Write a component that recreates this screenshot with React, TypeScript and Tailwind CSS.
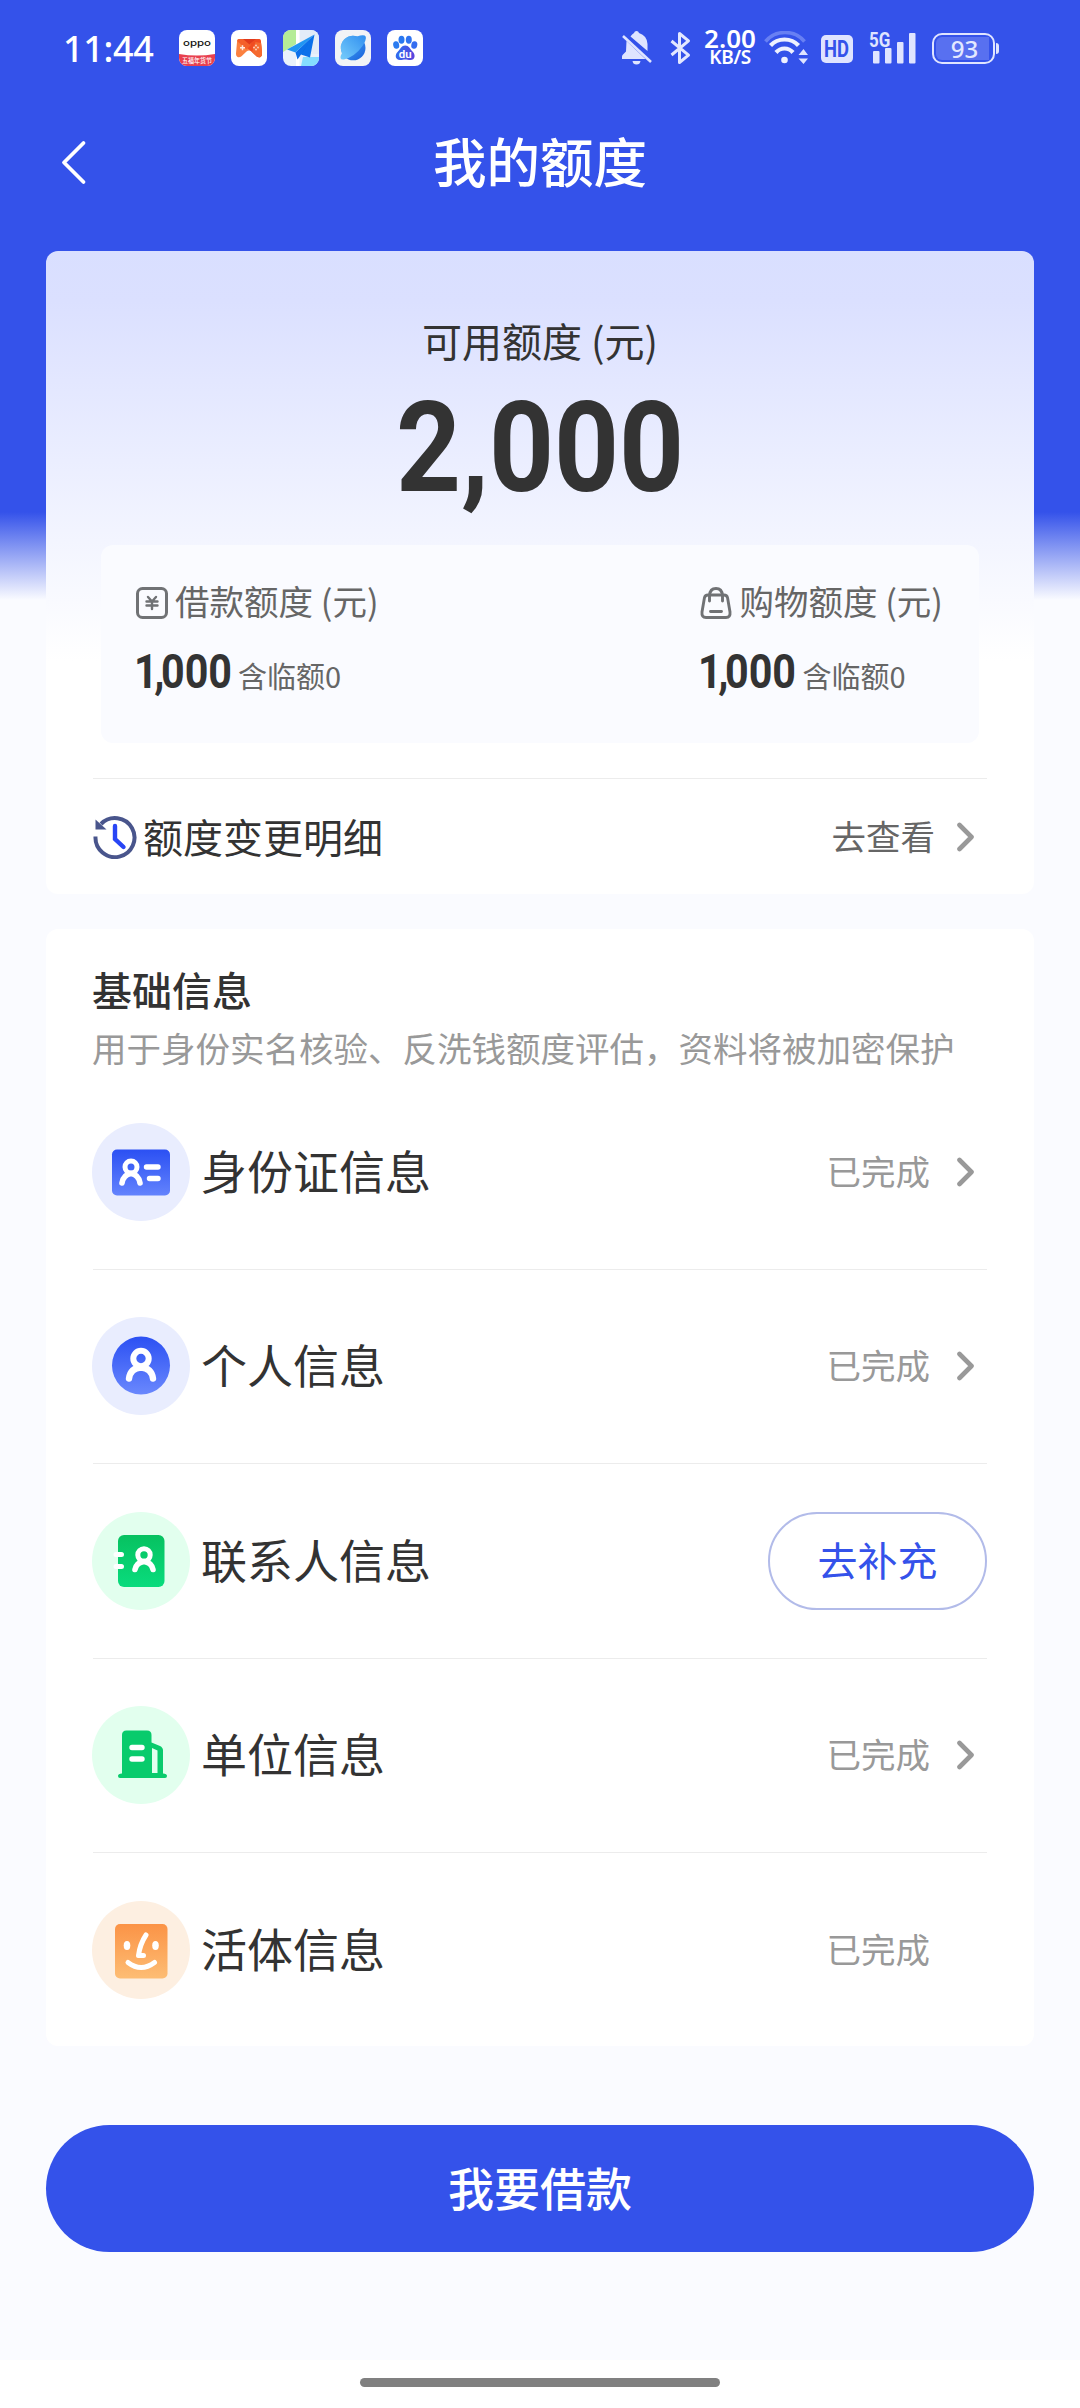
import type { ReactNode } from "react";

/* ---------- status bar ---------- */

function OppoIcon() {
  return (
    <svg className="size-9" viewBox="0 0 36 36">
      <defs>
        <clipPath id="oppoClip"><rect width="36" height="36" rx="8" /></clipPath>
      </defs>
      <g clipPath="url(#oppoClip)">
        <rect width="36" height="36" fill="#fff" />
        <path d="M0 24Q18 27 36 24V36H0Z" fill="#e8404f" />
        <text x="18" y="16.4" textAnchor="middle" textLength="28" lengthAdjust="spacingAndGlyphs" fontFamily="Inter, sans-serif" fontSize="9" fontWeight="500" fill="#111">oppo</text>
        <text x="18" y="33.2" textAnchor="middle" textLength="30" lengthAdjust="spacingAndGlyphs" fontFamily="'Noto Sans CJK SC', sans-serif" fontSize="6.4" fontWeight="500" fill="#fff">五福年货节</text>
      </g>
    </svg>
  );
}

function GameIcon() {
  return (
    <svg className="size-9" viewBox="0 0 36 36">
      <rect width="36" height="36" rx="8" fill="#fff" />
      <path d="M8 9H28Q29.600 9 29.900 11L31 23.500Q31.200 26 29.500 27Q27.500 28 25.500 26.200L20.500 21.500Q18 19.500 15.500 21.500L10.500 26.200Q8.500 28 6.500 27Q4.800 26 5 23.500L6.100 11Q6.400 9 8 9Z" fill="#fb8140" />
      <path d="M15 9H28Q29.600 9 29.900 11L31 23.500Q31.200 26 29.500 27Q27.500 28 25.500 26.200L20.500 21.500 15.500 17.500 24 9.500Z" fill="#f04c22" />
      <path d="M24.500 12 30 13 31 23.500Q31.200 26 29.500 27Q27.500 28 25.500 26.200L21 22Z" fill="#f56a30" />
      <path d="M6.100 11Q6.400 9 8 9H14L20 15 15.500 19.500Z" fill="#f4602a" />
      <path d="M12 9H25L18.500 14.500Z" fill="#e03a1c" />
      <path d="M9 17.800H14M11.500 15.300V20.300" stroke="#ffe9df" strokeWidth="1.500" />
      <circle cx="25" cy="15.500" r=".9" fill="#ffd9c8" />
      <circle cx="25" cy="19.500" r=".9" fill="#ffd9c8" />
      <circle cx="23" cy="17.500" r=".9" fill="#ffd9c8" />
      <circle cx="27" cy="17.500" r=".9" fill="#ffd9c8" />
    </svg>
  );
}

function MapIcon() {
  return (
    <svg className="size-9" viewBox="0 0 36 36">
      <defs>
        <clipPath id="mapClip"><rect width="36" height="36" rx="8" /></clipPath>
      </defs>
      <g clipPath="url(#mapClip)">
        <rect width="36" height="36" fill="#e9f1fb" />
        <path d="M0 0H13V14L0 22Z" fill="#b5ec97" />
        <path d="M16 0H36V24H18Z" fill="#e3ecf8" />
        <path d="M13 0H16.500V36H13Z" fill="#fff" />
        <path d="M20 27H36V36H18Z" fill="#84dcff" />
        <path d="M31.500 4.500 4 19.500 12.500 22.500Z" fill="#2196f3" />
        <path d="M31.500 4.500 12.500 22.500 14.500 29.500 18 24.500 27 27.500Z" fill="#0b70ea" />
        <path d="M31.500 4.500 18 24.500 14.500 29.500Z" fill="#0552bd" />
      </g>
    </svg>
  );
}

function BrowserIcon() {
  return (
    <svg className="size-9" viewBox="0 0 36 36">
      <defs>
        <linearGradient id="planet" x1="0" y1="0" x2="1" y2="1">
          <stop offset="0" stopColor="#4fb4f7" />
          <stop offset="1" stopColor="#1760dd" />
        </linearGradient>
        <linearGradient id="ring" x1="1" y1="0" x2="0" y2="1">
          <stop offset="0" stopColor="#2f8ef0" />
          <stop offset="1" stopColor="#77cdfb" />
        </linearGradient>
      </defs>
      <rect width="36" height="36" rx="8" fill="#f1f3f6" />
      <circle cx="18.200" cy="18" r="12.300" fill="url(#planet)" />
      <path d="M22 6.500Q29.500 4 30.800 6.800Q31.500 10 27.500 16Q20 26.500 9 29.500Q6 30 5.500 28Q5.300 26 7 23Q3.500 15 9.500 9Q15 4 22 6.500Z" fill="url(#ring)" />
    </svg>
  );
}

function BaiduIcon() {
  return (
    <svg className="size-9" viewBox="0 0 36 36">
      <defs>
        <linearGradient id="paw" x1="0" y1="0" x2="1" y2=".2">
          <stop offset="0" stopColor="#2672f2" />
          <stop offset="1" stopColor="#5846de" />
        </linearGradient>
      </defs>
      <rect width="36" height="36" rx="8" fill="#fff" />
      <ellipse cx="9.200" cy="15" rx="3" ry="3.800" fill="#2a7bf0" transform="rotate(-12 9.200 15)" />
      <ellipse cx="14.500" cy="9.800" rx="3" ry="4" fill="#2a78f0" />
      <ellipse cx="21.800" cy="9.800" rx="3" ry="4" fill="#2f74f0" />
      <ellipse cx="27.300" cy="15" rx="3" ry="3.800" fill="#356df0" transform="rotate(12 27.300 15)" />
      <path d="M18.200 15.500C22 15.500 23 19 25.500 21.500C29 25 28 30 23.500 30C21 30 20 29.500 18.200 29.500S15.500 30 13 30C8 30 7.500 24.500 11 21.500C13.500 19 14.500 15.500 18.200 15.500Z" fill="url(#paw)" />
      <text x="18.200" y="28" textAnchor="middle" fontFamily="Roboto, sans-serif" fontSize="11.500" fontWeight="600" fill="#fff">du</text>
    </svg>
  );
}

function BellOffIcon() {
  return (
    <svg className="h-[34px] w-[31px]" viewBox="0 0 31 34">
      <g fill="#dfe4ff">
        <path d="M15.500 0Q17.500 0 18 2Q26 4.500 26.500 13V20L9.500 5.500Q11 3 13 2Q13.500 0 15.500 0Z" />
        <path d="M5.500 10 24.500 28H1V25.500Q1 24.500 2 23.500L5 20.500Z" />
        <path d="M11.500 30H19.500Q19 33.500 15.500 33.500T11.500 30Z" />
      </g>
      <path d="M2 5 30 31" stroke="#dfe4ff" strokeWidth="2.600" />
    </svg>
  );
}

function BluetoothIcon() {
  return (
    <svg className="h-[34px] w-[21px]" viewBox="0 0 21 34" fill="none">
      <path d="M1.500 10 18.500 24.200 9.500 31.500V2.500L18.500 9.800 1.500 24" stroke="#e3e8ff" strokeWidth="3" strokeLinejoin="round" />
    </svg>
  );
}

function WifiIcon() {
  return (
    <svg className="h-[34px] w-11" viewBox="0 0 44 34" fill="none">
      <path d="M1.500 10.500Q9 1.500 21 1.500T40.500 10.500" stroke="#6880f3" strokeWidth="3.600" />
      <path d="M6.500 14.500Q12 8.500 20.500 8.500T34.500 14.500" stroke="#eef1ff" strokeWidth="4.200" />
      <path d="M12 21.500Q15.500 17.500 20.500 17.500T29 21.500" stroke="#eef1ff" strokeWidth="4.200" />
      <circle cx="20.500" cy="29" r="3.300" fill="#eef1ff" />
      <path d="M34.500 24 39.500 18 44 24ZM34.500 27.500H44L39.500 33Z" fill="#dfe4ff" />
    </svg>
  );
}

function SignalBars() {
  return (
    <svg className="h-[34px] w-[43px]" viewBox="0 0 43 34" fill="#dfe4ff">
      <rect x="0" y="20" width="6.500" height="12.500" rx="1" />
      <rect x="12" y="17" width="6.500" height="15.500" rx="1" />
      <rect x="24" y="11" width="6.500" height="21.500" rx="1" />
      <rect x="36" y="2" width="6.500" height="30.500" rx="1" />
    </svg>
  );
}

function StatusBar() {
  return (
    <div className="flex h-24 items-center pl-[63px] pr-[79px] text-white">
      <span className="w-[116px] pt-0.5 font-['Noto_Sans',sans-serif] text-[36px] font-medium leading-none tracking-[-0.300px]">11:44</span>
      <div className="flex gap-4">
        <OppoIcon />
        <GameIcon />
        <MapIcon />
        <BrowserIcon />
        <BaiduIcon />
      </div>
      <div className="ml-auto flex items-center">
        <BellOffIcon />
        <div className="ml-[18px]"><BluetoothIcon /></div>
        <div className="ml-3 flex h-[50px] w-[54px] flex-col items-center font-['Noto_Sans',sans-serif] font-semibold">
          <span className="mt-[3px] text-[26px] leading-[24px]">2.00</span>
          <span className="-mt-[2px] text-[19px] leading-[19px] tracking-[-0.300px]">KB/S</span>
        </div>
        <div className="ml-[7px]"><WifiIcon /></div>
        <div className="ml-[13px] mt-0.5 flex h-7 w-8 items-center justify-center rounded-[5px] bg-[#dfe4ff] font-['Roboto',sans-serif] text-[23px] font-bold leading-none text-[#3452ea]">
          <span className="scale-x-80">HD</span>
        </div>
        <div className="relative ml-[20px]">
          <SignalBars />
          <span className="absolute -left-[4px] -top-[3px] origin-left scale-x-85 font-['Roboto',sans-serif] text-[20px] font-bold leading-[24px] text-[#dfe4ff]">5G</span>
        </div>
        <div className="ml-4 mt-px flex h-[31px] w-[63px] items-center rounded-[10px] border-2 border-[#dfe4ff] p-[2px]">
          <div className="flex h-full w-[53px] items-center justify-center rounded-l-[6px] bg-[#5870f0] pl-1 font-['Noto_Sans',sans-serif] text-[24px] font-medium leading-none text-[#e3e8ff]">93</div>
        </div>
        <div className="ml-px mr-[2px] h-[11px] w-[3px] rounded-r-sm bg-[#dfe4ff]" />
      </div>
    </div>
  );
}

/* ---------- shared drawings ---------- */

function Chevron() {
  return (
    <svg className="h-[30px] w-[18px]" viewBox="0 0 18 30" fill="none">
      <path d="M2.500 3 14.500 15 2.500 27" stroke="#999" strokeWidth="4.600" strokeLinecap="round" strokeLinejoin="round" />
    </svg>
  );
}

function CashIcon() {
  return (
    <svg className="size-8" viewBox="0 0 32 32" fill="none" stroke="#707275" strokeLinecap="round">
      <rect x="1.500" y="1.500" width="29" height="29" rx="5" strokeWidth="3" />
      <path d="M12 10 16 14.500 20 10M10.500 14.500H21.500M10.500 18.500H21.500M16 14.500V22" strokeWidth="2.400" />
    </svg>
  );
}

function BagIcon() {
  return (
    <svg className="size-8" viewBox="0 0 32 32" fill="none" stroke="#707275" strokeLinecap="round">
      <path d="M8 8H24Q27 8 27.600 11L30 25Q30.600 30.500 26 30.500H6Q1.400 30.500 2 25L4.400 11Q5 8 8 8Z" strokeWidth="2.900" />
      <path d="M9.500 14V8.500Q10 1.500 16 1.500T22.500 8.500V14M10.500 24.500H21.500" strokeWidth="2.900" />
    </svg>
  );
}

function HistoryIcon() {
  return (
    <svg className="size-11" viewBox="0 0 44 44" fill="none">
      <path d="M2.500 21.500A19.500 19.500 0 1 0 8 9" stroke="#49558c" strokeWidth="4" />
      <path d="M2.500 4.500V14.500H13.500Z" fill="#49558c" />
      <path d="M22 11V24L30.500 32" stroke="#2845f5" strokeWidth="4.400" strokeLinecap="round" />
    </svg>
  );
}

function IdCardIcon() {
  return (
    <svg className="size-full" viewBox="0 0 98 98" fill="none">
      <defs>
        <linearGradient id="idBlue" x1="0" y1="0" x2="0" y2="1">
          <stop offset="0" stopColor="#2b50f3" />
          <stop offset="1" stopColor="#6383fd" />
        </linearGradient>
      </defs>
      <rect x="20" y="26.500" width="58" height="46" rx="5" fill="url(#idBlue)" />
      <g stroke="#fff" strokeLinecap="round">
        <circle cx="39" cy="44" r="6" strokeWidth="5" />
        <path d="M30 60Q31.500 51.500 39 50.500Q46.500 51.500 48 60" strokeWidth="5.600" />
        <path d="M54.500 44H66M57.500 55.500H66" strokeWidth="5.400" />
      </g>
    </svg>
  );
}

function PersonIcon() {
  return (
    <svg className="size-full" viewBox="0 0 98 98" fill="none">
      <defs>
        <linearGradient id="personBlue" x1="0" y1="0" x2="0" y2="1">
          <stop offset="0" stopColor="#2b50f3" />
          <stop offset="1" stopColor="#6a88fd" />
        </linearGradient>
      </defs>
      <circle cx="49" cy="48.500" r="29" fill="url(#personBlue)" />
      <g stroke="#fff" strokeLinecap="round">
        <circle cx="49" cy="41.500" r="7.700" strokeWidth="6" />
        <path d="M37 61.500Q38.500 51 49 50.500Q59.500 51 61 61.500" strokeWidth="6.400" />
      </g>
    </svg>
  );
}

function ContactIcon() {
  return (
    <svg className="size-full" viewBox="0 0 98 98" fill="none">
      <defs>
        <linearGradient id="contactGreen" x1="0" y1="0" x2="0" y2="1">
          <stop offset="0" stopColor="#07c160" />
          <stop offset="1" stopColor="#09dc7d" />
        </linearGradient>
      </defs>
      <rect x="26" y="23" width="46.500" height="52" rx="6" fill="url(#contactGreen)" />
      <g stroke="#fff" strokeLinecap="round">
        <path d="M24 42.500H29.500M24 54.500H29.500" strokeWidth="5" />
        <circle cx="52" cy="43" r="6.200" strokeWidth="5" />
        <path d="M43 57.500Q44.500 50.500 52 49.500Q59.500 50.500 61 57.500" strokeWidth="5.600" />
      </g>
    </svg>
  );
}

function CompanyIcon() {
  return (
    <svg className="size-full" viewBox="0 0 98 98" fill="none">
      <path d="M30 67.500V29Q30 24.500 34.500 24.500H55Q59.500 24.500 59.500 29V36.500L68 40Q71 41.500 71 44.500V67.500Q75 67.500 75 70Q75 72 73 72H28Q26 72 26 70Q26 67.500 30 67.500Z" fill="#09cb6c" />
      <path d="M60 42 65.500 44.500V67H60Z" fill="#e2ffee" />
      <path d="M40 41.500H50M40 53H50" stroke="#fff" strokeWidth="5.400" strokeLinecap="round" />
    </svg>
  );
}

function FaceIcon() {
  return (
    <svg className="size-full" viewBox="0 0 98 98" fill="none">
      <defs>
        <linearGradient id="faceOrange" x1="0" y1="0" x2="0" y2="1">
          <stop offset="0" stopColor="#fb9346" />
          <stop offset="1" stopColor="#fdbd74" />
        </linearGradient>
      </defs>
      <rect x="23" y="23" width="52.500" height="54.500" rx="5" fill="url(#faceOrange)" />
      <ellipse cx="35" cy="44.500" rx="3.300" ry="4.500" fill="#fff" />
      <ellipse cx="63.500" cy="44.500" rx="3.300" ry="4.500" fill="#fff" />
      <g stroke="#fff" strokeLinecap="round" strokeLinejoin="round">
        <path d="M54 34Q48 43 46.500 54.500H51.500" strokeWidth="5" />
        <path d="M36 61.500Q49 71.500 62.500 61.500" strokeWidth="5" />
      </g>
    </svg>
  );
}

/* ---------- content ---------- */

function Limit({ icon, label }: { icon: ReactNode; label: string }) {
  return (
    <div>
      <div className="flex h-[44px] items-center gap-[7px] text-[#666]">
        {icon}
        <span className="whitespace-nowrap pb-1.5 text-[34.500px] leading-none">{label}</span>
      </div>
      <div className="mt-[22px] flex h-[50px] items-center">
        <div className="w-[102px]">
          <span className="-ml-0.5 inline-block origin-left scale-x-86 font-['Roboto',sans-serif] text-[48px] font-bold leading-none text-[#333]">
            <span className="tracking-[-4px]">1,</span>000
          </span>
        </div>
        <span className="mt-1.5 text-[29px] leading-none text-[#666]">含临额0</span>
      </div>
    </div>
  );
}

type Row = { label: string; icon: ReactNode; tint: string; action: "open" | "fill" | "done" };

const rows: Row[] = [
  { label: "身份证信息", icon: <IdCardIcon />, tint: "bg-[#e9edfe]", action: "open" },
  { label: "个人信息", icon: <PersonIcon />, tint: "bg-[#e9edfe]", action: "open" },
  { label: "联系人信息", icon: <ContactIcon />, tint: "bg-[#e2ffee]", action: "fill" },
  { label: "单位信息", icon: <CompanyIcon />, tint: "bg-[#e2ffee]", action: "open" },
  { label: "活体信息", icon: <FaceIcon />, tint: "bg-[#fdefe1]", action: "done" },
];

function InfoRow({ row }: { row: Row }) {
  return (
    <li className="flex h-[194.500px] items-center border-b border-[#ececec] last:border-b-0">
      <div className={`-ml-px size-[98px] rounded-full ${row.tint}`}>{row.icon}</div>
      <span className="ml-[11px] pb-1.5 text-[46px] leading-none">{row.label}</span>
      {row.action === "fill" ? (
        <button className="ml-auto h-[98px] w-[219px] rounded-full border-2 border-[#b2bbe9] pb-1 text-[40px] leading-none text-[#3452ea]">去补充</button>
      ) : (
        <div className="ml-auto flex items-center pr-3 text-[34.500px] leading-none text-[#999]">
          <span className="pb-1">已完成</span>
          <span className="ml-[27px] w-[18px]">{row.action === "open" && <Chevron />}</span>
        </div>
      )}
    </li>
  );
}

export default function App() {
  return (
    <div className="flex h-[2408px] w-[1080px] flex-col overflow-hidden bg-[#fafbff] bg-[linear-gradient(to_bottom,#3452ea_0px,#3452ea_512px,#fafbff_600px)] font-['Noto_Sans_CJK_SC',sans-serif] text-[#333]">
      <StatusBar />

      <header className="grid h-[155px] grid-cols-[1fr_auto_1fr] items-start pt-[34px] text-white">
        <svg className="ml-[60px] mt-[9px] h-[46px] w-7" viewBox="0 0 28 46" fill="none">
          <path d="M23.500 4 4 23.500 23.500 43" stroke="#fff" strokeWidth="3.800" strokeLinecap="round" strokeLinejoin="round" />
        </svg>
        <h1 className="text-[53.500px] font-medium leading-[60px]">我的额度</h1>
      </header>

      <section className="mx-[46px] flex h-[643px] flex-col rounded-xl bg-[linear-gradient(to_bottom,#d9dfff_0px,#dbe0ff_50px,#f3f5ff_290px,#ffffff_410px)] px-[47px]">
        <p className="mt-[67px] text-center text-[40px] leading-[44px]">可用额度 (元)</p>
        <div className="mt-[25px] flex h-[122px] items-center justify-center">
          <span className="scale-x-90 font-['Roboto',sans-serif] text-[126px] font-bold leading-none">2,000</span>
        </div>
        <div className="mx-2 mt-[36px] flex h-[198px] shrink-0 justify-between rounded-xl bg-[#fafbff] pl-[35px] pr-[36px] pt-[36px]">
          <Limit icon={<CashIcon />} label="借款额度 (元)" />
          <Limit icon={<BagIcon />} label="购物额度 (元)" />
        </div>
        <div className="mt-[35px] flex flex-1 items-center border-t border-[#ececec]">
          <HistoryIcon />
          <span className="ml-[6px] pb-0.5 text-[40px] leading-none">额度变更明细</span>
          <span className="ml-auto pb-0.5 text-[34.500px] leading-none text-[#666]">去查看</span>
          <div className="ml-[22px] mr-3"><Chevron /></div>
        </div>
      </section>

      <section className="mx-[46px] mt-[35px] h-[1117px] rounded-xl bg-white px-[47px]">
        <div className="flex h-[146px] flex-col pt-[38px]">
          <h2 className="-ml-px text-[40px] font-medium leading-[44px]">基础信息</h2>
          <p className="-ml-px mt-[14px] whitespace-nowrap text-[34.500px] leading-[44px] text-[#999]">用于身份实名核验、反洗钱额度评估，资料将被加密保护</p>
        </div>
        <ul>
          {rows.map((row) => (
            <InfoRow key={row.label} row={row} />
          ))}
        </ul>
      </section>

      <button className="mx-[46px] mt-[79px] h-[127px] rounded-full bg-[#3452ea] pb-1.5 text-[46px] font-medium leading-none text-white">我要借款</button>

      <div className="mt-auto flex h-12 justify-center bg-white pt-[18px]">
        <div className="h-[9px] w-[360px] rounded-full bg-[#808080]" />
      </div>
    </div>
  );
}
